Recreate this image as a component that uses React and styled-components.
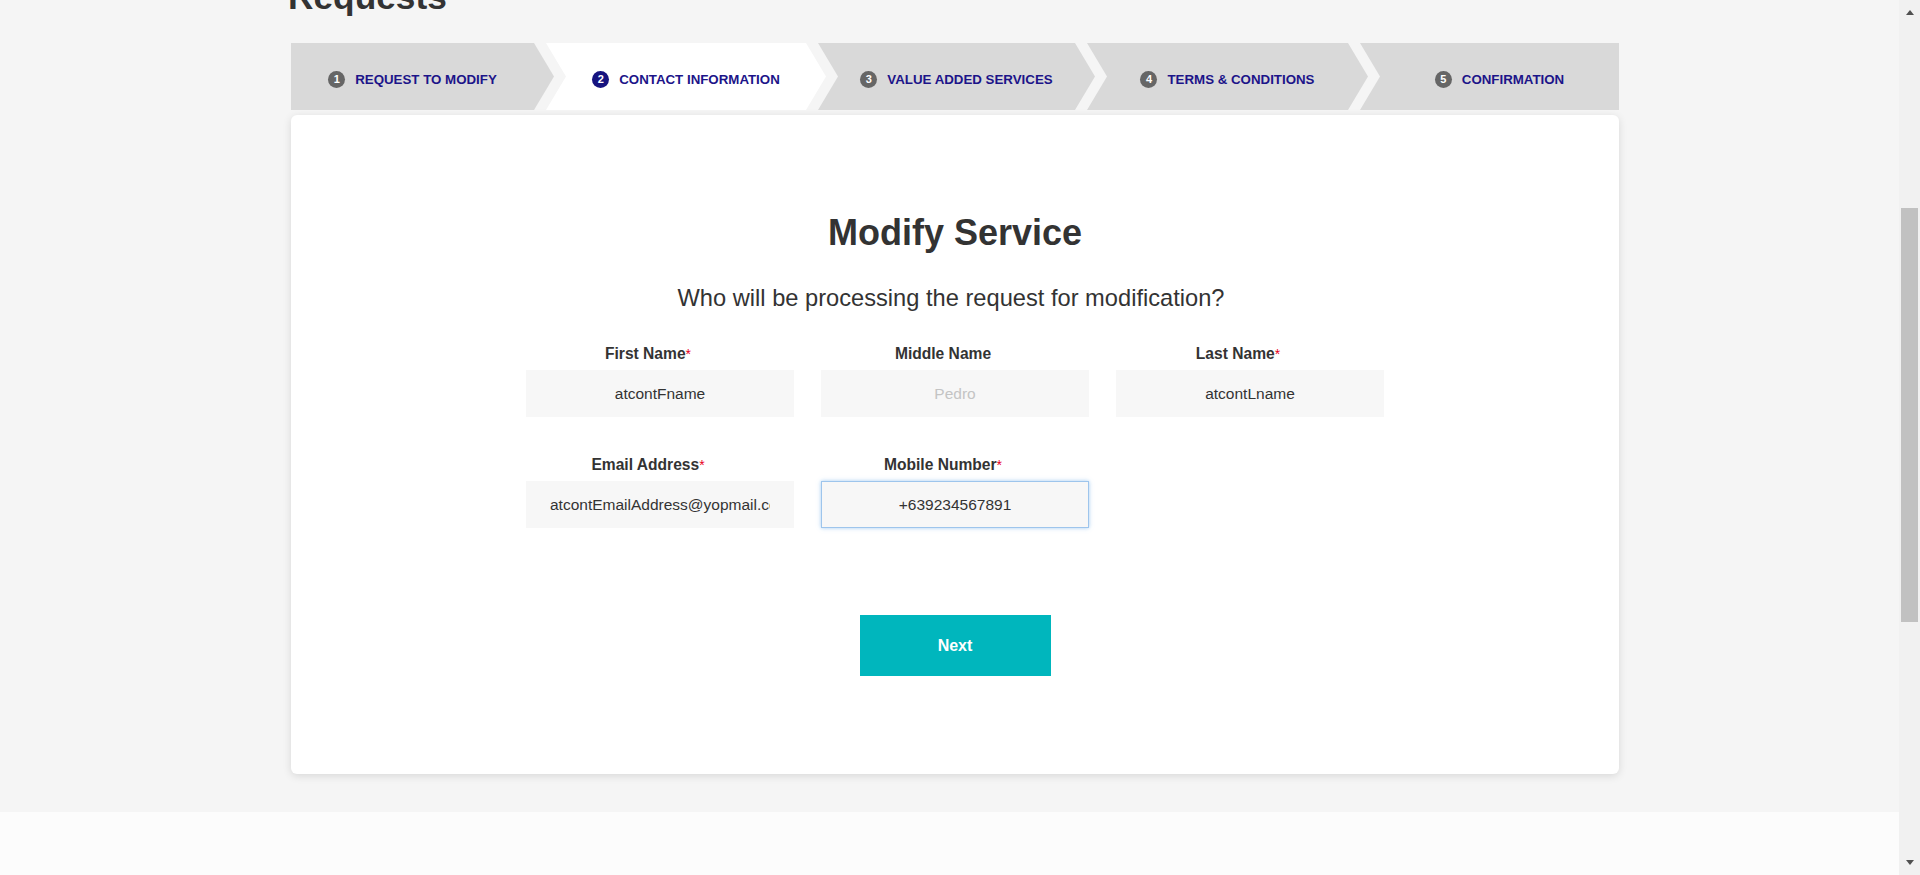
import React from 'react';
import styled, { createGlobalStyle } from 'styled-components';

const GlobalStyle = createGlobalStyle`
  html, body { margin: 0; padding: 0; overflow: hidden; }
  body { font-family: "Liberation Sans", Arial, sans-serif; color: #333; }
  * { box-sizing: border-box; }
`;

const Screen = styled.div`
  display: flex;
  width: 1920px;
  height: 875px;
  overflow: hidden;
`;

const Viewport = styled.div`
  flex: 1;
  min-width: 0;
  display: flex;
  flex-direction: column;
`;

const Content = styled.main`
  height: 812px;
  background: #f5f5f5;
  padding-left: 291px;
`;

const Footer = styled.footer`
  flex: 1;
  background: #fcfcfc;
`;

const Container = styled.div`
  width: 1328px;
`;

const PageTitle = styled.h1`
  margin: -24.5px 0 0 -3px;
  font-size: 35.3px;
  line-height: 42px;
  font-weight: 700;
  color: #333;
`;

const Stepper = styled.ol`
  display: flex;
  list-style: none;
  margin: 25.5px 0 0;
  padding: 0;
  height: 67px;
`;

const clipFor = (first, last) => {
  if (first) return 'polygon(0 0, calc(100% - 20px) 0, 100% 50%, calc(100% - 20px) 100%, 0 100%)';
  if (last) return 'polygon(0 0, 100% 0, 100% 100%, 0 100%, 20px 50%)';
  return 'polygon(0 0, calc(100% - 20px) 0, 100% 50%, calc(100% - 20px) 100%, 0 100%, 20px 50%)';
};

const Step = styled.li`
  flex: 0 0 ${p => p.$w}px;
  margin-left: ${p => (p.$first ? 0 : -8)}px;
  background: ${p => (p.$active ? '#ffffff' : '#d9d9d9')};
  clip-path: ${p => clipFor(p.$first, p.$last)};
  display: flex;
  align-items: center;
  justify-content: center;
  gap: 10px;
  padding: 5px ${p => (p.$last ? 0 : 20)}px 0 ${p => (p.$first ? 0 : 20)}px;
`;

const Badge = styled.span`
  width: 17px;
  height: 17px;
  border-radius: 50%;
  background: ${p => (p.$active ? '#16137f' : '#666666')};
  color: #fff;
  font-size: 11px;
  font-weight: 700;
  display: flex;
  align-items: center;
  justify-content: center;
  flex-shrink: 0;
`;

const StepLabel = styled.span`
  font-size: 13.3px;
  font-weight: 700;
  color: #1c1489;
  text-transform: uppercase;
  white-space: nowrap;
`;

const Card = styled.section`
  margin-top: 5px;
  background: #fff;
  border-radius: 6px;
  box-shadow: 0 2px 8px rgba(0, 0, 0, 0.12);
  padding: 97px 0 98px;
  display: flex;
  flex-direction: column;
  align-items: center;
`;

const CardTitle = styled.h2`
  margin: 0;
  font-size: 36px;
  line-height: 42px;
  font-weight: 700;
  color: #333;
`;

const CardSubtitle = styled.p`
  margin: 29.5px 8px 0 0;
  font-size: 23.66px;
  line-height: 28px;
  color: #333;
`;

const FormGrid = styled.div`
  margin-top: 32.5px;
  display: grid;
  grid-template-columns: repeat(3, 268px);
  column-gap: 27px;
  row-gap: 38px;
`;

const Field = styled.div`
  display: flex;
  flex-direction: column;
  align-items: center;
`;

const Label = styled.label`
  font-size: 15.6px;
  line-height: 18px;
  font-weight: 700;
  color: #333;
  margin: 1px 24px 7px 0;
`;

const Required = styled.span`
  color: #e8001c;
  font-weight: 400;
  font-size: 14px;
  vertical-align: top;
`;

const Input = styled.input`
  width: 268px;
  height: 47px;
  background: #f7f7f7;
  border: 1px solid ${p => (p.$focused ? '#9ec5ec' : 'transparent')};
  box-shadow: ${p => (p.$focused ? '0 0 4px rgba(102, 170, 233, 0.6)' : 'none')};
  border-radius: 0;
  outline: none;
  text-align: center;
  font-family: "Liberation Sans", Arial, sans-serif;
  font-size: 15.5px;
  color: #333;
  padding: 0 23px;
  &::placeholder { color: #c4c4c4; }
`;

const NextButton = styled.button`
  margin-top: 87px;
  width: 191px;
  height: 61px;
  border: none;
  background: #00b6bd;
  color: #fff;
  font-family: "Liberation Sans", Arial, sans-serif;
  font-size: 16px;
  font-weight: 700;
`;

const ScrollTrack = styled.div`
  width: 21px;
  background: #f1f1f1;
  display: flex;
  flex-direction: column;
  align-items: center;
`;

const ArrowUp = styled.div`
  width: 0;
  height: 0;
  margin-top: 10px;
  border-left: 4.5px solid transparent;
  border-right: 4.5px solid transparent;
  border-bottom: 5px solid #505050;
`;

const ArrowDown = styled.div`
  width: 0;
  height: 0;
  margin-top: auto;
  margin-bottom: 10px;
  border-left: 4.5px solid transparent;
  border-right: 4.5px solid transparent;
  border-top: 5px solid #505050;
`;

const Thumb = styled.div`
  width: 17px;
  height: 414px;
  margin-top: 193px;
  background: #c1c1c1;
`;

const steps = [
  { n: 1, label: 'Request to Modify', w: 263 },
  { n: 2, label: 'Contact Information', w: 280, active: true },
  { n: 3, label: 'Value Added Services', w: 277 },
  { n: 4, label: 'Terms & Conditions', w: 281 },
  { n: 5, label: 'Confirmation', w: 259 },
];

const fields = [
  { label: 'First Name', required: true, value: 'atcontFname' },
  { label: 'Middle Name', placeholder: 'Pedro' },
  { label: 'Last Name', required: true, value: 'atcontLname' },
  { label: 'Email Address', required: true, value: 'atcontEmailAddress@yopmail.com' },
  { label: 'Mobile Number', required: true, value: '+639234567891', focused: true },
];

export default function App() {
  return (
    <>
      <GlobalStyle />
      <Screen>
        <Viewport>
          <Content>
            <Container>
              <PageTitle>Requests</PageTitle>
              <Stepper>
                {steps.map((s, i) => (
                  <Step
                    key={s.n}
                    $w={s.w}
                    $first={i === 0}
                    $last={i === steps.length - 1}
                    $active={s.active}
                  >
                    <Badge $active={s.active}>{s.n}</Badge>
                    <StepLabel>{s.label}</StepLabel>
                  </Step>
                ))}
              </Stepper>
              <Card>
                <CardTitle>Modify Service</CardTitle>
                <CardSubtitle>Who will be processing the request for modification?</CardSubtitle>
                <FormGrid>
                  {fields.map(f => (
                    <Field key={f.label}>
                      <Label>
                        {f.label}
                        {f.required && <Required>*</Required>}
                      </Label>
                      <Input
                        readOnly
                        defaultValue={f.value}
                        placeholder={f.placeholder}
                        $focused={f.focused}
                      />
                    </Field>
                  ))}
                </FormGrid>
                <NextButton type="button">Next</NextButton>
              </Card>
            </Container>
          </Content>
          <Footer />
        </Viewport>
        <ScrollTrack>
          <ArrowUp />
          <Thumb />
          <ArrowDown />
        </ScrollTrack>
      </Screen>
    </>
  );
}
